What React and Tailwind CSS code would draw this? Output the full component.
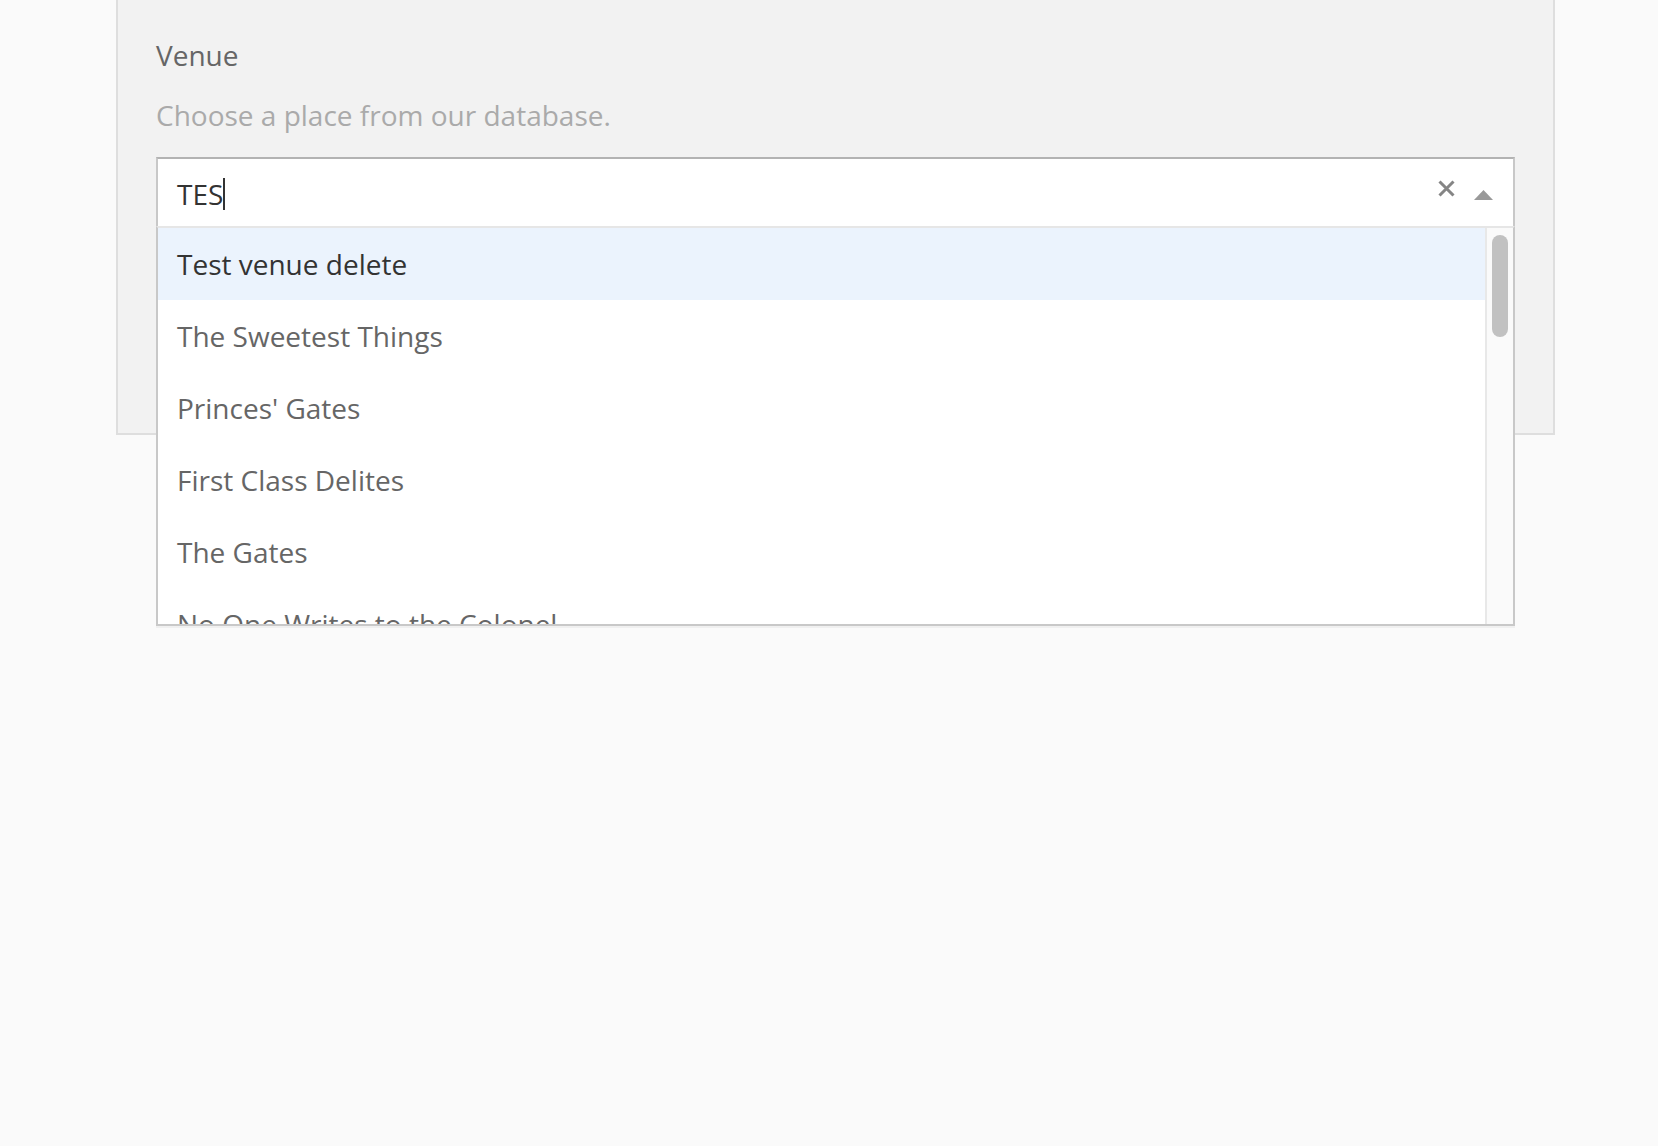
import { useState } from 'react'

const venues = [
  'Test venue delete',
  'The Sweetest Things',
  "Princes' Gates",
  'First Class Delites',
  'The Gates',
  'No One Writes to the Colonel',
]

const App = () => {
  const [query] = useState('TES')
  const [active, setActive] = useState(0)

  return (
    <div className="min-h-screen w-full bg-[#fafafa] font-['Open_Sans',sans-serif]">
      <div className="ml-[116px] w-[1439px] h-[435px] bg-[#f2f2f2] border-2 border-t-0 border-[#dedede] px-[38px] pt-[35px]">
        <div className="text-[28px] leading-[40px] text-[#666]">Venue</div>
        <div className="mt-[20px] text-[28px] leading-[40px] text-[#aaa]">Choose a place from our database.</div>

        <div className="relative mt-[22px]">
          {/* control */}
          <div className="flex items-center h-[69px] bg-white border-2 border-b-0 border-[#c8c8c8] border-t-[#b3b3b3] pl-[19px] pr-[20px]">
            <div className="flex-1 flex items-center pt-[2px]">
              <span className="text-[28px] leading-[40px] text-[#333]">{query}</span>
              <span className="w-[2px] h-[32px] bg-[#333]" />
            </div>
            <svg width="17" height="17" viewBox="0 0 17 17" className="mt-[-8px]">
              <path d="M1.5 1.5 L15.5 15.5 M15.5 1.5 L1.5 15.5" stroke="#858585" strokeWidth="3" strokeLinecap="butt" />
            </svg>
            <svg width="19" height="10" viewBox="0 0 19 10" className="ml-[19px] mt-[4px]">
              <path d="M0 10 L9.5 0 L19 10 Z" fill="#999" />
            </svg>
          </div>

          {/* menu */}
          <div className="absolute left-0 right-0 top-full z-10 flex h-[400px] bg-white border-2 border-[#c8c8c8] border-t-[#e6e6e6] shadow-[0_2px_0_rgba(0,0,0,0.04)] overflow-hidden">
            <div className="flex-1 overflow-hidden">
              {venues.map((v, i) => (
                <div
                  key={v}
                  onMouseEnter={() => setActive(i)}
                  className={`h-[72px] flex items-center pl-[19px] text-[28px] leading-[40px] cursor-pointer ${i === active ? 'bg-[#ebf3fd] text-[#333]' : 'text-[#666]'}`}
                >
                  {v}
                </div>
              ))}
            </div>
            <div className="w-[28px] bg-[#fafafa] border-l-2 border-[#e8e8e8] pt-[7px] flex justify-center">
              <div className="w-[16px] h-[102px] rounded-full bg-[#c1c1c1]" />
            </div>
          </div>
        </div>
      </div>
    </div>
  )
}

export default App
